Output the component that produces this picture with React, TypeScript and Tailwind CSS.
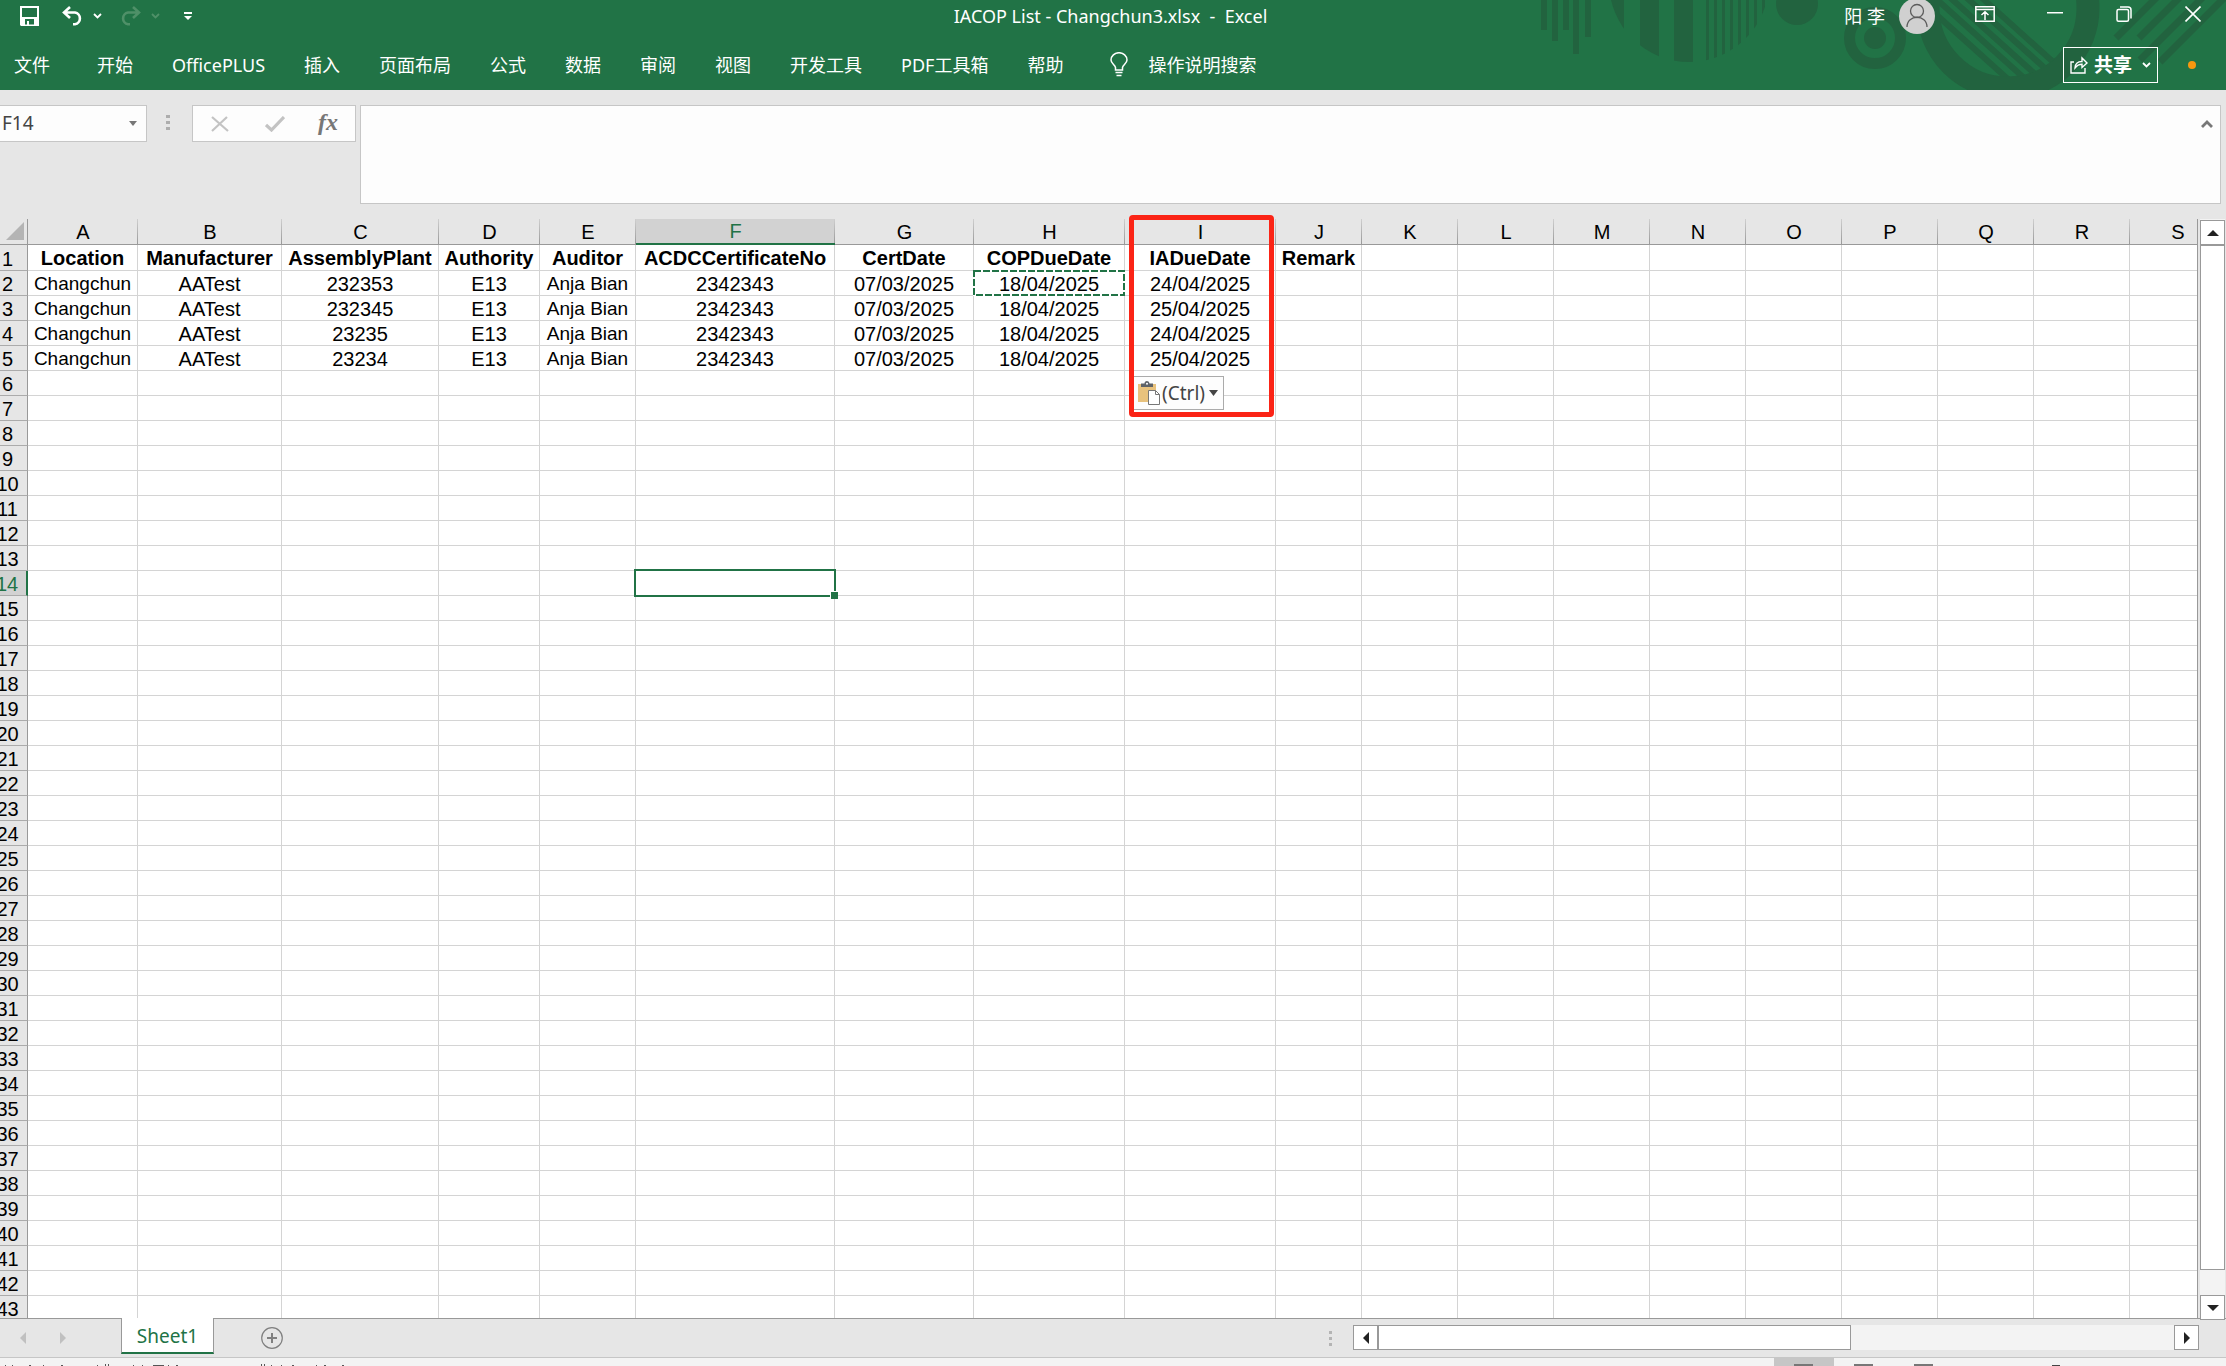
import React, { useState } from "react";

interface Column {
  letter: string;
  title: string;
  width: string;
}

interface RibbonTab {
  label: string;
  className: string;
}

const COLUMNS: Column[] = [
  { letter: "A", title: "Location", width: "w-[110px]" },
  { letter: "B", title: "Manufacturer", width: "w-[144px]" },
  { letter: "C", title: "AssemblyPlant", width: "w-[157px]" },
  { letter: "D", title: "Authority", width: "w-[101px]" },
  { letter: "E", title: "Auditor", width: "w-[96px]" },
  { letter: "F", title: "ACDCCertificateNo", width: "w-[199px]" },
  { letter: "G", title: "CertDate", width: "w-[139px]" },
  { letter: "H", title: "COPDueDate", width: "w-[151px]" },
  { letter: "I", title: "IADueDate", width: "w-[151px]" },
  { letter: "J", title: "Remark", width: "w-[86px]" },
  { letter: "K", title: "", width: "w-[96px]" },
  { letter: "L", title: "", width: "w-[96px]" },
  { letter: "M", title: "", width: "w-[96px]" },
  { letter: "N", title: "", width: "w-[96px]" },
  { letter: "O", title: "", width: "w-[96px]" },
  { letter: "P", title: "", width: "w-[96px]" },
  { letter: "Q", title: "", width: "w-[96px]" },
  { letter: "R", title: "", width: "w-[96px]" },
  { letter: "S", title: "", width: "w-[96px]" },
];

const RECORDS: string[][] = [
  ["Changchun", "AATest", "232353", "E13", "Anja Bian", "2342343", "07/03/2025", "18/04/2025", "24/04/2025"],
  ["Changchun", "AATest", "232345", "E13", "Anja Bian", "2342343", "07/03/2025", "18/04/2025", "25/04/2025"],
  ["Changchun", "AATest", "23235", "E13", "Anja Bian", "2342343", "07/03/2025", "18/04/2025", "24/04/2025"],
  ["Changchun", "AATest", "23234", "E13", "Anja Bian", "2342343", "07/03/2025", "18/04/2025", "25/04/2025"],
];

const ROWS = Array.from({ length: 43 }, (_, i) => i + 1);

const TABS: RibbonTab[] = [
  { label: "文件", className: "mr-2" },
  { label: "开始", className: "" },
  { label: "OfficePLUS", className: "" },
  { label: "插入", className: "" },
  { label: "页面布局", className: "" },
  { label: "公式", className: "" },
  { label: "数据", className: "" },
  { label: "审阅", className: "" },
  { label: "视图", className: "" },
  { label: "开发工具", className: "" },
  { label: "PDF工具箱", className: "" },
  { label: "帮助", className: "" },
];

function cellValue(row: number, col: number): string {
  if (row === 1) return COLUMNS[col].title;
  return RECORDS[row - 2]?.[col] ?? "";
}

function HeaderArt() {
  return (
    <svg className="absolute right-0 top-0" width="696" height="90" viewBox="1530 0 696 90" fill="#22633f" aria-hidden="true">
      <defs>
        <clipPath id="disc"><circle cx="1689" cy="-18" r="80" /></clipPath>
        <clipPath id="bowl"><circle cx="2008" cy="8" r="69" /></clipPath>
      </defs>
      <path d="M1541 0h6v30h-6zM1552 0h6v41h-6zM1563 0h6v30h-6zM1573 0h6v54h-6zM1585 0h6v37h-6z" />
      <path
        clipPath="url(#disc)"
        d="M1605 0h19v70h-19zM1640 0h19v70h-19zM1674 0h19v70h-19zM1706 0h3v70h-3zM1714 0h3v70h-3zM1722 0h3v70h-3zM1730 0h3v70h-3zM1738 0h3v70h-3zM1746 0h3v70h-3zM1754 0h3v70h-3zM1762 0h3v70h-3z"
      />
      <circle cx="1797" cy="4" r="21" />
      <circle cx="1875" cy="38" r="25.500" fill="none" stroke="#22633f" strokeWidth="11" />
      <circle cx="1875" cy="38" r="11" />
      <circle cx="2008" cy="8" r="80" fill="none" stroke="#22633f" strokeWidth="23" />
      <g clipPath="url(#bowl)" stroke="#22633f" strokeWidth="6">
        <path d="M1920 0l100 90M1933 -4l100 90M1945 -7l100 90M1958 -10l100 90M1971 -12l100 90" />
      </g>
      <g stroke="#22633f" strokeWidth="7">
        <path d="M2116 38l44 -44M2139 38l44 -44M2140 60l66 -66M2160 62l72 -72" />
      </g>
    </svg>
  );
}

function Chevron({ className }: { className?: string }) {
  return (
    <svg className={className} width="9" height="6" viewBox="0 0 9 6" fill="none" stroke="currentColor" strokeWidth="1.800">
      <path d="M1 1l3.500 3.500L8 1" />
    </svg>
  );
}

function TitleBar() {
  return (
    <div className="relative grid h-8 grid-cols-[1fr_auto_1fr] grid-rows-[32px] items-center pl-5 pr-[25px]">
      <div className="flex items-center">
        <button aria-label="保存" className="mr-[23px]">
          <svg width="19" height="20" viewBox="0 0 19 20">
            <path fill="#fff" fillRule="evenodd" d="M0 0h19v20H1l-1-1zM2 2v9h15V2zM5 13v5.500h2V15h2v3.500h5V13z" />
          </svg>
        </button>
        <button aria-label="撤消" className="mr-2.5">
          <svg width="21" height="20" viewBox="0 0 21 20" fill="none" stroke="#fff" strokeWidth="2.600">
            <path d="M8 1L2 6.500l6 5.500M2 6.500h11a6 6 0 0 1 0 11.800h-2" />
          </svg>
        </button>
        <button aria-label="撤消选项" className="mr-[18px]"><Chevron /></button>
        <button aria-label="恢复" className="mr-2.5 text-[#4f9068]" disabled>
          <svg width="21" height="20" viewBox="0 0 21 20" fill="none" stroke="currentColor" strokeWidth="2.600">
            <path d="M13 1l6 5.500-6 5.500M19 6.500H8a6 6 0 0 0 0 11.800h2" />
          </svg>
        </button>
        <button aria-label="恢复选项" className="mr-6 text-[#4f9068]" disabled><Chevron /></button>
        <button aria-label="自定义快速访问工具栏">
          <svg width="8" height="8" viewBox="0 0 8 8" fill="#fff"><path d="M0 0h8v2H0zM0 4h8L4 8z" /></svg>
        </button>
      </div>
      <h1 className="whitespace-pre text-lg leading-8">IACOP List - Changchun3.xlsx  -  Excel</h1>
      <div className="flex items-center justify-end">
        <span className="mr-3.5 text-lg leading-8">阳 李</span>
        <button aria-label="帐户" className="mr-10">
          <svg width="36" height="36" viewBox="0 0 36 36">
            <circle cx="18" cy="18" r="18" fill="#d0d0d0" />
            <g fill="none" stroke="#5c5c5c" strokeWidth="1.300">
              <circle cx="18" cy="13" r="6.500" />
              <path d="M8 29c0-13 20-13 20 0" />
            </g>
          </svg>
        </button>
        <div className="flex items-center pb-1">
          <button aria-label="功能区显示选项" className="mr-[52px]">
            <svg width="20" height="16" viewBox="0 0 20 16" fill="none" stroke="#fff" strokeWidth="1.500">
              <path d="M.8.8h18.400v14.400H.8zM.8 3.500h18.400M10 14V6M6.500 9L10 5.800 13.500 9" />
            </svg>
          </button>
          <button aria-label="最小化" className="mr-[53px]">
            <svg width="16" height="16" viewBox="0 0 16 16" fill="#fff"><path d="M0 6h16v1.500H0z" /></svg>
          </button>
          <button aria-label="还原" className="mr-[53px]">
            <svg width="16" height="16" viewBox="0 0 16 16" fill="none" stroke="#fff" strokeWidth="1.500">
              <rect x="1" y="3.500" width="11.500" height="11.700" rx="1.500" />
              <path d="M4 1h8a3 3 0 0 1 3 3v8.500" />
            </svg>
          </button>
          <button aria-label="关闭">
            <svg width="16" height="16" viewBox="0 0 16 16" fill="none" stroke="#fff" strokeWidth="1.600"><path d="M.5.500l15 15M15.500.500l-15 15" /></svg>
          </button>
        </div>
      </div>
    </div>
  );
}

function RibbonTabs() {
  return (
    <div className="relative flex h-[58px] items-center pb-px pl-3.5 pr-[30px] pt-2">
      <nav className="flex gap-[39px] text-lg leading-6">
        {TABS.map((tab) => (
          <button key={tab.label} className={tab.className}>{tab.label}</button>
        ))}
      </nav>
      <button className="ml-[47px] flex items-center gap-5 text-lg leading-6">
        <svg width="18" height="25" viewBox="0 0 18 25" fill="none" stroke="#fff" strokeWidth="1.500">
          <path d="M5.500 18v-2.500C5 13 1 11.500 1 8a8 7.300 0 0 1 16 0c0 3.500-4 5-4.500 7.500V18zM5.500 20.500h7M6.500 23.500h5" />
        </svg>
        操作说明搜索
      </button>
      <button className="ml-auto flex h-9 w-[95px] items-center border border-white pl-1.5 text-[19px] font-bold leading-6">
        <svg className="mr-1.5" width="18" height="18" viewBox="0 0 18 18" fill="none" stroke="#fff" strokeWidth="1.400">
          <path d="M4 6H1v11h14v-5M5 12c0-4 2.500-6.500 7-6.500V2l5 5-5 4.500V8.300c-3 0-5 1-7 3.700z" />
        </svg>
        共享
        <Chevron className="ml-2.5" />
      </button>
      <span className="ml-[30px] h-2 w-2 rounded-full bg-[#f7980f]" />
    </div>
  );
}

function FormulaBar() {
  const [formula, setFormula] = useState("");
  return (
    <div className="flex h-[129px] items-start pr-[5px] pt-[15px]">
      <div className="flex h-[37px] w-[147px] items-center border border-l-0 border-[#c6c6c6] bg-[#fdfdfd] pl-0.5 pr-[9px]">
        <input aria-label="名称框" defaultValue="F14" className="min-w-0 flex-1 bg-transparent text-[19px] text-[#444] outline-none" />
        <button aria-label="名称列表">
          <svg width="8" height="5" viewBox="0 0 8 5" fill="#777"><path d="M0 0h8L4 5z" /></svg>
        </button>
      </div>
      <svg className="ml-[19px] mt-2.5" width="4" height="16" viewBox="0 0 4 16" fill="#adadad"><path d="M0 0h4v3H0zM0 6h4v3H0zM0 12h4v3H0z" /></svg>
      <div className="ml-[22px] flex h-[37px] w-[164px] items-center border border-[#c6c6c6] bg-[#fdfdfd] pl-[18px]">
        <button aria-label="取消" className="mr-9">
          <svg width="18" height="16" viewBox="0 0 18 16" fill="none" stroke="#c3c3c3" strokeWidth="2.200"><path d="M1 1l16 14M16 1L1 15" /></svg>
        </button>
        <button aria-label="输入" className="mr-[33px]">
          <svg width="20" height="16" viewBox="0 0 20 16" fill="none" stroke="#c3c3c3" strokeWidth="3.200"><path d="M1 9l5.500 5L19 1" /></svg>
        </button>
        <button aria-label="插入函数" className="pb-1 font-['Liberation_Serif',serif] text-2xl font-bold italic leading-8 text-[#777]">fx</button>
      </div>
      <div className="ml-1 flex h-[99px] flex-1 items-start border border-[#c6c6c6] bg-[#fdfdfd]">
        <textarea
          aria-label="编辑栏"
          value={formula}
          onChange={(e) => setFormula(e.target.value)}
          className="h-full flex-1 resize-none bg-transparent px-2 py-1 text-[19px] outline-none"
        />
        <button aria-label="折叠编辑栏" className="mr-[7px] mt-3.5">
          <svg width="12" height="8" viewBox="0 0 12 8" fill="none" stroke="#777" strokeWidth="2.800"><path d="M1 7l5-5 5 5" /></svg>
        </button>
      </div>
    </div>
  );
}

function Cell({ row, col }: { row: number; col: number }) {
  const letter = COLUMNS[col].letter;
  const isText = row > 1 && (letter === "A" || letter === "E");
  return (
    <td
      className={`relative whitespace-nowrap border-b border-r border-[#d4d4d4] p-0 text-center ${
        row === 1 ? "text-xl font-bold leading-6" : isText ? "pt-0.5 text-[19px] leading-[22px]" : "pt-0.5 text-xl leading-[22px]"
      }`}
    >
      {cellValue(row, col)}
      {letter === "H" && row === 2 && (
        <svg className="absolute -left-px -top-px" width="152" height="26" viewBox="0 0 152 26" fill="none">
          <rect x="1" y="1" width="150" height="24" stroke="#fff" strokeWidth="2" />
          <rect x="1" y="1" width="150" height="24" stroke="#217346" strokeWidth="2" strokeDasharray="7 2" />
        </svg>
      )}
      {letter === "F" && row === 14 && (
        <div className="absolute -inset-0.5 z-10 border-2 border-[#217346]">
          <span className="absolute -bottom-1 -right-1 h-2 w-2 border-l border-t border-white bg-[#217346]" />
        </div>
      )}
    </td>
  );
}

function Sheet() {
  return (
    <div className="relative min-w-0 flex-1">
      <div className="h-full overflow-hidden border-r border-[#999]">
        <table className="-ml-3 w-[2237px] table-fixed border-separate border-spacing-0 bg-white font-['Liberation_Sans',Arial,sans-serif] text-black">
          <colgroup>
            <col className="w-10" />
            {COLUMNS.map((c) => <col key={c.letter} className={c.width} />)}
          </colgroup>
          <thead>
            <tr>
              <th className="relative h-[26px] border-b border-r border-[#999] bg-[#e6e6e6] p-0">
                <svg className="absolute bottom-1 right-[3px]" width="18" height="18" viewBox="0 0 18 18" fill="#b4b4b4"><path d="M18 0v18H0z" /></svg>
              </th>
              {COLUMNS.map((c) => (
                <th
                  key={c.letter}
                  scope="col"
                  className={`relative h-[26px] p-0 text-xl font-normal leading-6 ${
                    c.letter === "F" ? "border-b-2 border-[#217346] bg-[#d2d2d2] text-[#217346]" : "border-b border-[#999] bg-[#e6e6e6]"
                  }`}
                >
                  {c.letter}
                  <span className="absolute inset-y-0 right-0 w-px bg-linear-to-b from-[#cfcfcf] to-[#999]" />
                </th>
              ))}
            </tr>
          </thead>
          <tbody>
            {ROWS.map((row) => (
              <tr key={row} className={row === 1 ? "h-[26px]" : "h-[25px]"}>
                <th
                  scope="row"
                  className={`border-b p-0 pt-0.5 text-center text-xl font-normal leading-[22px] ${
                    row === 14
                      ? "border-b-[#ababab] border-r-2 border-r-[#217346] bg-[#d2d2d2] text-[#217346]"
                      : "border-b-[#ababab] border-r border-r-[#999] bg-[#e6e6e6]"
                  }`}
                >
                  {row}
                </th>
                {COLUMNS.map((c, col) => <Cell key={c.letter} row={row} col={col} />)}
              </tr>
            ))}
          </tbody>
        </table>
      </div>

      <button className="absolute left-[1133px] top-[157px] z-10 flex h-[34px] w-[91px] items-center border border-[#ababab] bg-[#fdfdfd] pl-1 text-[19px] leading-6 text-[#444]">
        <svg className="mr-0.5" width="22" height="24" viewBox="0 0 22 24">
          <path d="M0 3h18v18H0z" fill="#e8c27d" />
          <path d="M3 6V2.500h3.500a2.500 2.500 0 0 1 5 0H15V6z" fill="#5f6368" />
          <circle cx="9" cy="2.700" r="1" fill="#fff" />
          <path d="M10.500 9.500h7l4 4v10h-11z" fill="#fff" stroke="#777" />
          <path d="M17.500 9.500v4h4" fill="none" stroke="#777" />
        </svg>
        (Ctrl)
        <svg className="ml-1" width="9" height="6" viewBox="0 0 9 6" fill="#444"><path d="M0 0h9L4.500 6z" /></svg>
      </button>
      <div className="pointer-events-none absolute left-[1129px] top-[-4px] z-20 h-[202px] w-[145px] rounded border-[5px] border-[#fb2416]" />
    </div>
  );
}

function VerticalScroll() {
  return (
    <div className="z-10 -mb-0.5 ml-0.5 mr-px flex w-[25px] flex-col bg-[#f3f3f3] pt-px">
      <button aria-label="向上滚动" className="flex h-[25px] items-center justify-center border border-[#999] bg-white">
        <svg width="12" height="6" viewBox="0 0 12 6" fill="#222"><path d="M6 0l6 6H0z" /></svg>
      </button>
      <div className="flex-1 border border-[#999] bg-white" />
      <div className="h-[25px]" />
      <button aria-label="向下滚动" className="flex h-[25px] items-center justify-center border border-[#999] bg-white">
        <svg width="12" height="6" viewBox="0 0 12 6" fill="#222"><path d="M0 0h12L6 6z" /></svg>
      </button>
    </div>
  );
}

function SheetTabs() {
  return (
    <div className="flex h-[39px] items-start border-t border-[#999] pr-[27px]">
      <div className="flex h-[38px] w-[121px] items-center gap-[34px] pl-5">
        <button aria-label="上一张工作表">
          <svg width="6" height="12" viewBox="0 0 6 12" fill="#c0c0c0"><path d="M6 0v12L0 6z" /></svg>
        </button>
        <button aria-label="下一张工作表">
          <svg width="6" height="12" viewBox="0 0 6 12" fill="#c0c0c0"><path d="M0 0v12l6-6z" /></svg>
        </button>
      </div>
      <button className="-mt-px h-9 w-[93px] border-x border-b-2 border-x-[#999] border-b-[#217346] bg-white pt-0.5 text-[19px] leading-8 text-[#217346]">Sheet1</button>
      <button aria-label="新工作表" className="ml-[47px] mt-2">
        <svg width="22" height="22" viewBox="0 0 22 22" fill="none" stroke="#808080">
          <circle cx="11" cy="11" r="10.300" strokeWidth="1.200" />
          <path d="M11 6v10M6 11h10" strokeWidth="2" />
        </svg>
      </button>
      <svg className="ml-auto mt-3" width="4" height="16" viewBox="0 0 4 16" fill="#b4b4b4"><path d="M0 0h3v3H0zM0 6h3v3H0zM0 12h3v3H0z" /></svg>
      <div className="ml-5 mt-1.5 flex h-[25px] w-[846px] bg-[#f3f3f3]">
        <button aria-label="向左滚动" className="flex w-[25px] items-center justify-center border border-[#999] bg-white">
          <svg width="6" height="12" viewBox="0 0 6 12" fill="#222"><path d="M6 0v12L0 6z" /></svg>
        </button>
        <div className="w-[473px] border border-[#999] bg-white" />
        <button aria-label="向右滚动" className="ml-auto flex w-[25px] items-center justify-center border border-[#999] bg-white">
          <svg width="6" height="12" viewBox="0 0 6 12" fill="#222"><path d="M0 0v12l6-6z" /></svg>
        </button>
      </div>
    </div>
  );
}

function StatusBar() {
  return (
    <div className="flex h-[9px] items-start justify-between overflow-hidden border-t border-[#c6c6c6] bg-[#f3f3f3]">
      <svg width="350" height="8" viewBox="0 0 350 8" fill="#555" aria-hidden="true">
        <path d="M5 7h1v1H5zM12 7h1v1h-1zM29 7h2v1h-2zM43 7h1v1h-1zM61 7h2v1h-2zM97 7h1v1h-1zM105 6h1v2h-1zM108 6h1v2h-1zM133 7h1v1h-1zM142 7h1v1h-1zM153 7h11v1h-11zM168 7h1v1h-1zM176 7h2v1h-2zM261 6h1v2h-1zM264 6h1v2h-1zM271 7h1v1h-1zM281 7h1v1h-1zM292 7h2v1h-2zM316 7h1v1h-1zM324 7h2v1h-2zM342 7h2v1h-2z" />
      </svg>
      <svg width="452" height="8" viewBox="0 0 452 8" fill="#777" aria-hidden="true">
        <path d="M0 0h60v8H0z" fill="#c6c6c6" />
        <path d="M20 6h19v2H20zM80 6h19v2H80zM140 6h19v2h-19z" />
        <path d="M278 7h8v1h-8z" fill="#444" />
      </svg>
    </div>
  );
}

export default function App() {
  return (
    <div className="flex h-screen flex-col overflow-hidden bg-[#e6e6e6] font-['Noto_Sans','Noto_Sans_CJK_SC',sans-serif]">
      <header className="relative h-[90px] shrink-0 bg-[#217346] text-white">
        <HeaderArt />
        <TitleBar />
        <RibbonTabs />
      </header>
      <FormulaBar />
      <main className="flex min-h-0 flex-1">
        <Sheet />
        <VerticalScroll />
      </main>
      <SheetTabs />
      <StatusBar />
    </div>
  );
}
